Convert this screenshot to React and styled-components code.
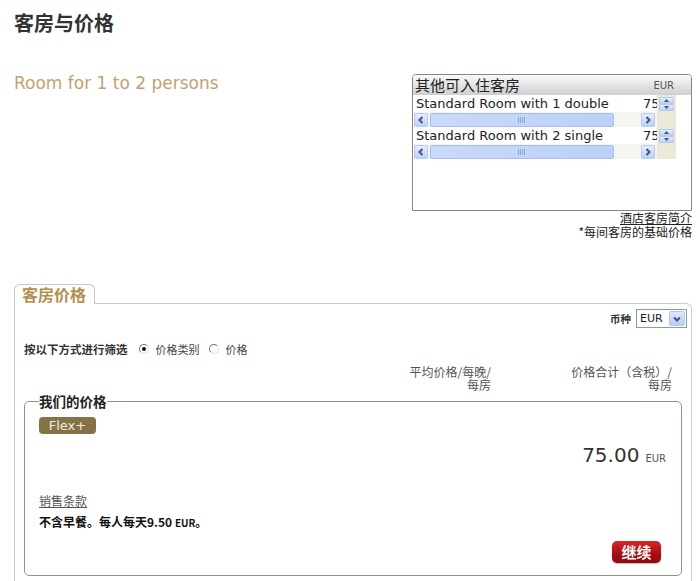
import React from "react";
import styled, { createGlobalStyle } from "styled-components";

const Global = createGlobalStyle`
  html, body { margin: 0; padding: 0; background: #fff; }
  body { font-family: "DejaVu Sans", "Noto Sans CJK SC", sans-serif; color: #333; }
  * { box-sizing: border-box; }
`;

const CJK = `"Noto Sans CJK SC", "DejaVu Sans", sans-serif`;

const Page = styled.div`
  width: 700px;
  padding: 12px 8px 0 14px;
`;

const Title = styled.h1`
  margin: 0;
  font-family: ${CJK};
  font-size: 20px;
  line-height: 22px;
  font-weight: 700;
  color: #333;
`;

const TopRow = styled.div`
  margin-top: 40px;
  display: flex;
  justify-content: space-between;
  align-items: flex-start;
`;

const Persons = styled.div`
  font-size: 17px;
  line-height: 18px;
  color: #c3a272;
`;

const RightCol = styled.div`
  width: 280px;
`;

const RoomsBox = styled.div`
  height: 137px;
  border: 1px solid #858585;
  border-radius: 4px 4px 0 0;
  overflow: hidden;
`;

const BoxHeader = styled.div`
  height: 20px;
  display: flex;
  justify-content: space-between;
  align-items: center;
  padding: 0 17px 0 2px;
  background: linear-gradient(#fafafa, #cfcfcf);
`;

const BoxTitle = styled.span`
  font-family: ${CJK};
  font-size: 15px;
  line-height: 20px;
  color: #222;
`;

const Small = styled.span`
  font-size: ${(p) => p.$size || 10}px;
  color: ${(p) => p.$color || "#555"};
  font-weight: ${(p) => (p.$bold ? 700 : 400)};
`;

const RoomRow = styled.div`
  width: 262px;
  margin-left: 1px;
  display: flex;
`;

const RoomMain = styled.div`
  width: 243px;
`;

const TextLine = styled.div`
  height: 17px;
  display: flex;
  align-items: center;
`;

const RoomName = styled.div`
  width: 229px;
  padding-left: 2px;
  font-size: 13px;
  line-height: 17px;
  color: #222;
  white-space: nowrap;
  overflow: hidden;
`;

const PriceClip = styled.div`
  width: 14px;
  font-size: 13px;
  line-height: 17px;
  color: #222;
  white-space: nowrap;
  overflow: hidden;
`;

const SpinCol = styled.div`
  width: 19px;
  height: 32px;
  background: #ece9d8;
  display: flex;
  flex-direction: column;
  padding: 2px 0 0 2px;
`;

const SpinBtn = styled.div`
  width: 15px;
  height: 7px;
  border-radius: 1px;
  background: linear-gradient(#e6effd, #bccff4);
  border: 1px solid #b5c8ee;
  display: flex;
  align-items: center;
  justify-content: center;
`;

const Track = styled.div`
  width: 243px;
  height: 15px;
  display: flex;
  align-items: center;
  padding: 0 2px 0 0;
  background: #f5f5f1;
`;

const ArrowBtn = styled.div`
  width: 14px;
  height: 14px;
  border-radius: 2px;
  border: 1px solid #b7c9ee;
  background: linear-gradient(#e6effd, #bcd0f6);
  display: flex;
  align-items: center;
  justify-content: center;
  margin-left: ${(p) => (p.$right ? "auto" : "0")};
`;

const Thumb = styled.div`
  width: 184px;
  height: 14px;
  margin-left: 2px;
  border-radius: 2px;
  border: 1px solid #a6bdee;
  background: linear-gradient(90deg, #c9daf9, #bcd0f8);
  display: flex;
  align-items: center;
  justify-content: center;
`;

const LinksBlock = styled.div`
  text-align: right;
  font-family: ${CJK};
  font-size: 12px;
  line-height: 14px;
  color: #222;
`;

const LinkLine = styled.div`
  text-decoration: ${(p) => (p.$underline ? "underline" : "none")};
`;

const TabsArea = styled.div`
  margin-top: 45px;
`;

const Tab = styled.div`
  position: relative;
  z-index: 1;
  width: 81px;
  height: 20px;
  margin-bottom: -1px;
  padding-left: 7px;
  border: 1px solid #c9c9c9;
  border-bottom: none;
  border-radius: 6px 6px 0 0;
  background: #fff;
  font-family: ${CJK};
  font-weight: 700;
  font-size: 16px;
  line-height: 19px;
  color: #b58e4c;
`;

const Panel = styled.div`
  border: 1px solid #cbcbcb;
  border-bottom: none;
  border-radius: 0 6px 0 0;
  padding: 5px 4px 20px 9px;
`;

const CurrencyRow = styled.div`
  display: flex;
  justify-content: flex-end;
  align-items: center;
  gap: 5px;
`;

const CurLabel = styled.span`
  font-family: ${CJK};
  font-weight: 700;
  font-size: 10.5px;
  color: #333;
`;

const Select = styled.div`
  width: 51px;
  height: 19px;
  border: 1px solid #7f9db9;
  display: flex;
  align-items: center;
  justify-content: space-between;
  padding: 1px 1px 1px 3px;
  font-size: 11px;
  color: #222;
  background: #fff;
`;

const SelectBtn = styled.div`
  width: 16px;
  height: 15px;
  border-radius: 2px;
  background: linear-gradient(#dfe9fc, #b6cbf4);
  border: 1px solid #b5c8ee;
  display: flex;
  align-items: center;
  justify-content: center;
`;

const FilterRow = styled.div`
  margin-top: 14px;
  height: 14px;
  display: flex;
  align-items: center;
  font-family: ${CJK};
  font-size: 11px;
  color: #444;
`;

const FilterLabel = styled.span`
  font-weight: 700;
  font-size: 11.5px;
  color: #333;
  margin-right: 11px;
`;

const Radio = styled.span`
  width: 10px;
  height: 10px;
  border-radius: 50%;
  border: 1px solid;
  border-color: #777 #ddd #ddd #777;
  background: #fff;
  display: inline-flex;
  align-items: center;
  justify-content: center;
  margin-right: 7px;
  &::after {
    content: "";
    width: 4px;
    height: 4px;
    border-radius: 50%;
    background: ${(p) => (p.$checked ? "#111" : "transparent")};
  }
`;

const RadioText = styled.span`
  margin-right: 9px;
`;

const HeaderRow = styled.div`
  margin-top: 9px;
  display: flex;
  justify-content: flex-end;
  gap: 61px;
  padding-right: 15px;
  font-family: ${CJK};
  font-size: 12px;
  line-height: 13px;
  color: #555;
`;

const HeadCell = styled.div`
  width: ${(p) => p.$w}px;
  text-align: right;
`;

const Fieldset = styled.fieldset`
  margin: 3px 5px 0 0;
  padding: 0 15px 12px 14px;
  border: 1px solid #9c8e83;
  border-radius: 5px;
  min-width: 0;
`;

const Legend = styled.legend`
  padding: 0;
  font-family: ${CJK};
  font-weight: 700;
  font-size: 13.5px;
  line-height: 14px;
  color: #222;
`;

const Badge = styled.div`
  margin-top: 9px;
  width: 57px;
  height: 17px;
  border-radius: 4px;
  background: #857249;
  color: #f3ecdd;
  font-size: 13px;
  line-height: 17px;
  text-align: center;
`;

const PriceRow = styled.div`
  margin-top: 9px;
  text-align: right;
  line-height: 24px;
`;

const Price = styled.span`
  font-size: 20px;
  color: #333;
  margin-right: 6px;
`;

const Terms = styled.div`
  margin-top: 23px;
  font-family: ${CJK};
  font-size: 12px;
  line-height: 14px;
  color: #555;
  text-decoration: underline;
`;

const Breakfast = styled.div`
  margin-top: 7px;
  font-family: ${CJK};
  font-size: 12px;
  line-height: 14px;
  font-weight: 700;
  color: #111;
`;

const ButtonRow = styled.div`
  margin-top: 11px;
  display: flex;
  justify-content: flex-end;
  padding-right: 5px;
`;

const Continue = styled.button`
  width: 49px;
  height: 22px;
  border: none;
  border-radius: 5px;
  padding: 0;
  background: linear-gradient(#d9262a, #a80d10 60%, #8c0a0c);
  color: #fff;
  font-family: ${CJK};
  font-weight: 700;
  font-size: 15px;
  line-height: 22px;
  box-shadow: 0 1px 1px rgba(0, 0, 0, 0.25);
`;

const Chevron = ({ dir }) => (
  <svg width="8" height="8" viewBox="0 0 8 8">
    {dir === "left" && <path d="M5.5 1 L2.5 4 L5.5 7" stroke="#3e5488" strokeWidth="2" fill="none" />}
    {dir === "right" && <path d="M2.5 1 L5.5 4 L2.5 7" stroke="#3e5488" strokeWidth="2" fill="none" />}
    {dir === "down" && <path d="M1 2.5 L4 5.5 L7 2.5" stroke="#3e5488" strokeWidth="2" fill="none" />}
  </svg>
);

const Tri = ({ up }) => (
  <svg width="5" height="3" viewBox="0 0 5 3">
    <path d={up ? "M0 3 L2.5 0 L5 3 Z" : "M0 0 L5 0 L2.5 3 Z"} fill="#3e5488" />
  </svg>
);

const Grip = () => (
  <svg width="8" height="6" viewBox="0 0 8 6">
    {[0.5, 2.5, 4.5, 6.5].map((x) => (
      <line key={x} x1={x} y1="0" x2={x} y2="6" stroke="#90a8dc" strokeWidth="1" />
    ))}
  </svg>
);

const rooms = ["Standard Room with 1 double", "Standard Room with 2 single"];

export default function App() {
  return (
    <>
      <Global />
      <Page>
        <Title>客房与价格</Title>
        <TopRow>
          <Persons>Room for 1 to 2 persons</Persons>
          <RightCol>
            <RoomsBox>
              <BoxHeader>
                <BoxTitle>其他可入住客房</BoxTitle>
                <Small>EUR</Small>
              </BoxHeader>
              {rooms.map((r) => (
                <RoomRow key={r}>
                  <RoomMain>
                    <TextLine>
                      <RoomName>{r}</RoomName>
                      <PriceClip>75.00</PriceClip>
                    </TextLine>
                    <Track>
                      <ArrowBtn><Chevron dir="left" /></ArrowBtn>
                      <Thumb><Grip /></Thumb>
                      <ArrowBtn $right><Chevron dir="right" /></ArrowBtn>
                    </Track>
                  </RoomMain>
                  <SpinCol>
                    <SpinBtn><Tri up /></SpinBtn>
                    <SpinBtn><Tri /></SpinBtn>
                  </SpinCol>
                </RoomRow>
              ))}
            </RoomsBox>
            <LinksBlock>
              <LinkLine $underline>酒店客房简介</LinkLine>
              <LinkLine>*每间客房的基础价格</LinkLine>
            </LinksBlock>
          </RightCol>
        </TopRow>

        <TabsArea>
          <Tab>客房价格</Tab>
          <Panel>
            <CurrencyRow>
              <CurLabel>币种</CurLabel>
              <Select>
                <span>EUR</span>
                <SelectBtn><Chevron dir="down" /></SelectBtn>
              </Select>
            </CurrencyRow>
            <FilterRow>
              <FilterLabel>按以下方式进行筛选</FilterLabel>
              <Radio $checked />
              <RadioText>价格类别</RadioText>
              <Radio />
              <RadioText>价格</RadioText>
            </FilterRow>
            <HeaderRow>
              <HeadCell $w={100}>平均价格/每晚/<br />每房</HeadCell>
              <HeadCell $w={120}>价格合计（含税）/<br />每房</HeadCell>
            </HeaderRow>
            <Fieldset>
              <Legend>我们的价格</Legend>
              <Badge>Flex+</Badge>
              <PriceRow>
                <Price>75.00</Price>
                <Small $size={10}>EUR</Small>
              </PriceRow>
              <Terms>销售条款</Terms>
              <Breakfast>
                不含早餐。每人每天9.50 <Small $size={10} $color="#111" $bold>EUR</Small>。
              </Breakfast>
              <ButtonRow>
                <Continue>继续</Continue>
              </ButtonRow>
            </Fieldset>
          </Panel>
        </TabsArea>
      </Page>
    </>
  );
}
